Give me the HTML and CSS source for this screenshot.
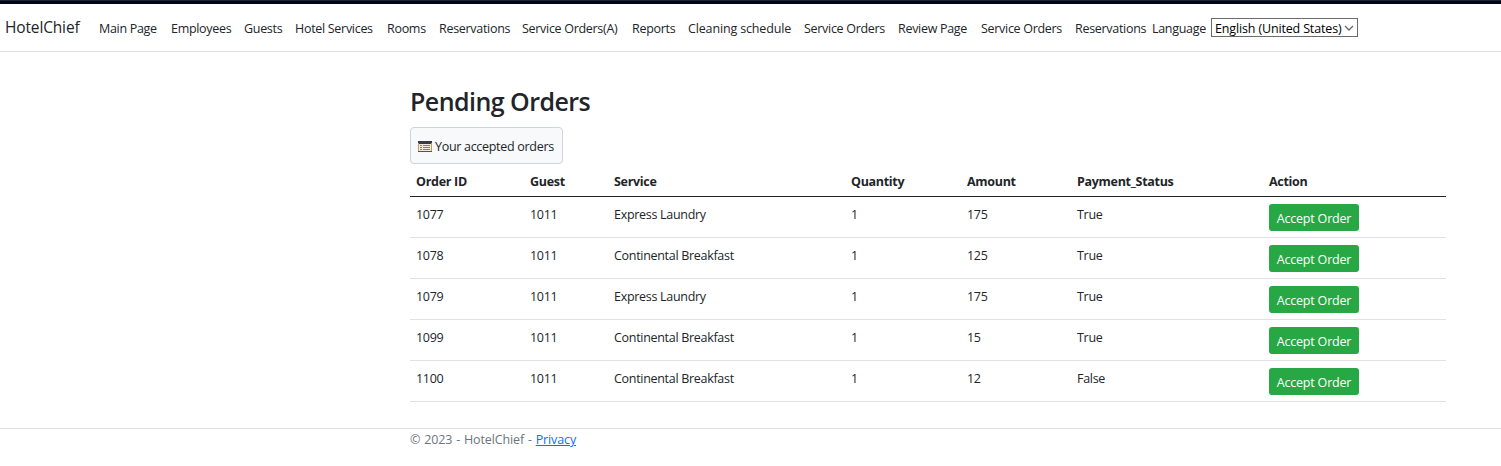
FILE: index.html
```
<!DOCTYPE html>
<html lang="en">
<head>
<meta charset="utf-8">
<title>Pending Orders - HotelChief</title>
<link rel="stylesheet" href="styles.css">
</head>
<body>
<div class="topbar"></div>
<header class="navbar">
  <a class="brand">HotelChief</a>
  <nav class="nav">
    <a>Main Page</a><a>Employees</a><a>Guests</a><a>Hotel Services</a><a>Rooms</a><a>Reservations</a><a>Service Orders(A)</a><a>Reports</a><a class="wide">Cleaning schedule</a><a>Service Orders</a><a>Review Page</a><a>Service Orders</a><a>Reservations</a><span>Language</span>
  </nav>
  <div class="select"><span>English (United States)</span><svg width="10" height="8" viewBox="0 0 10 8"><path d="M1 2l4 4 4-4" fill="none" stroke="#666" stroke-width="1.3"/></svg></div>
</header>
<main class="container">
  <h1>Pending Orders</h1>
  <a class="accepted"><svg width="14" height="11" viewBox="0 0 14 11" shape-rendering="crispEdges"><rect width="14" height="11" fill="#555"/><path d="M1 3h12v7H1z" fill="#efe9df"/><path d="M0 0h14v3H0z" fill="#343c44"/><path d="M.5 2v8M13.5 2v8" stroke="#cf9a58"/><path d="M2 4.5h2M2 6.5h2M2 8.5h2M5 4.5h7M5 6.5h7M5 8.5h7" stroke="#85817b"/></svg><span>Your accepted orders</span></a>
  <table class="orders">
    <colgroup><col class="c-id"><col class="c-guest"><col class="c-service"><col class="c-qty"><col class="c-amount"><col class="c-status"><col class="c-action"></colgroup>
    <thead><tr><th>Order ID</th><th>Guest</th><th>Service</th><th>Quantity</th><th>Amount</th><th>Payment_Status</th><th>Action</th></tr></thead>
    <tbody>
      <tr><td>1077</td><td>1011</td><td>Express Laundry</td><td>1</td><td>175</td><td>True</td><td><button class="accept">Accept Order</button></td></tr>
      <tr><td>1078</td><td>1011</td><td>Continental Breakfast</td><td>1</td><td>125</td><td>True</td><td><button class="accept">Accept Order</button></td></tr>
      <tr><td>1079</td><td>1011</td><td>Express Laundry</td><td>1</td><td>175</td><td>True</td><td><button class="accept">Accept Order</button></td></tr>
      <tr><td>1099</td><td>1011</td><td>Continental Breakfast</td><td>1</td><td>15</td><td>True</td><td><button class="accept">Accept Order</button></td></tr>
      <tr><td>1100</td><td>1011</td><td>Continental Breakfast</td><td>1</td><td>12</td><td>False</td><td><button class="accept">Accept Order</button></td></tr>
    </tbody>
  </table>
</main>
<footer class="footer"><span>© 2023 - HotelChief - </span><a>Privacy</a></footer>
</body>
</html>
```
FILE: styles.css
```
* { box-sizing: border-box; }
body {
  margin: 0;
  height: 466px;
  overflow: hidden;
  background: #fff;
  color: #212529;
  font: 12.5px/19px "Open Sans", "Noto Sans", sans-serif;
  letter-spacing: -0.3px;
  white-space: nowrap;
}
.topbar { height: 4px; background: #020617; border-top: 1px solid #1c2433; }
.navbar {
  display: flex;
  align-items: center;
  height: 48px;
  border-bottom: 1px solid #dee2e6;
  padding-left: 5px;
}
.brand { width: 94px; font-size: 15.5px; letter-spacing: -0.15px; }
.nav {
  display: grid;
  grid-template-columns: 72px 73px 51px 92px 52px 83px 110px 56px 116px 94px 83px 94px 77px 59px;
  padding-top: 1px;
}
.nav .wide { letter-spacing: -0.15px; }
.select {
  display: flex;
  align-items: center;
  justify-content: space-between;
  width: 147px;
  height: 19px;
  padding: 1px 3px 0;
  border: 1px solid #6b6b6b;
  color: #000;
  letter-spacing: -0.15px;
}
.container { width: 1036px; margin-left: 410px; }
h1 { margin: 0; padding-top: 33px; height: 75px; font-size: 25px; line-height: 32px; font-weight: 600; letter-spacing: -0.55px; }
.accepted {
  display: flex;
  align-items: center;
  gap: 3px;
  width: 153px;
  height: 37px;
  padding: 2px 7px 0;
  border: 1px solid #ced4da;
  border-radius: 4px;
  background: #f8f9fa;
}
.orders { width: 1036px; table-layout: fixed; border-collapse: separate; border-spacing: 0; }
.c-id { width: 114px; }
.c-guest { width: 84px; }
.c-service { width: 237px; }
.c-qty { width: 116px; }
.c-amount { width: 110px; }
.c-status { width: 192px; }
.c-action { width: 183px; }
th { height: 33px; padding: 2px 6px 0; text-align: left; font-weight: 700; border-bottom: 1px solid #212529; }
td { height: 41px; padding: 8px 6px 0; vertical-align: top; border-bottom: 1px solid #dee2e6; }
td:last-child { padding-top: 7px; }
.accept {
  display: block;
  width: 90px;
  height: 27px;
  padding: 2px 0 0;
  border: 0;
  border-radius: 3px;
  background: #28a745;
  color: #fff;
  font: inherit;
  letter-spacing: -0.2px;
}
.footer { margin-top: 26px; padding: 1px 0 0 410px; border-top: 1px solid #dee2e6; color: #6c757d; letter-spacing: -0.13px; word-spacing: 0.8px; }
.footer span { white-space: pre; }
.footer a { color: #0d6efd; text-decoration: underline; }
```
